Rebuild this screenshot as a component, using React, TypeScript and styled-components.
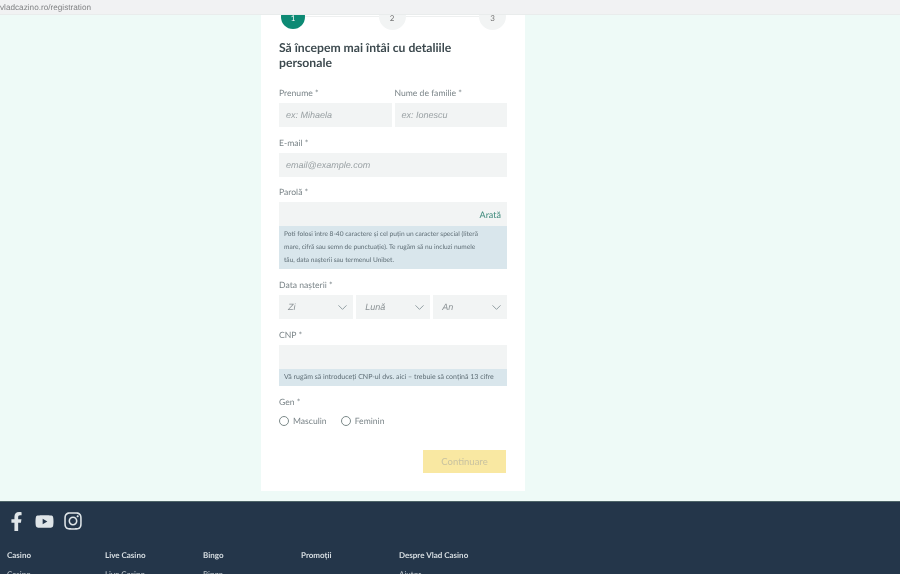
import React from 'react';
import styled, { createGlobalStyle } from 'styled-components';
import { FaFacebookF, FaYoutube, FaInstagram } from 'react-icons/fa';
import { ChevronDown } from 'lucide-react';

const GlobalStyle = createGlobalStyle`
  html, body {
    margin: 0;
    height: 574px;
    overflow: hidden;
    background: #eefaf7;
  }
  body {
    font-family: 'Lato', 'Open Sans', sans-serif;
    text-rendering: geometricPrecision;
  }
  * {
    box-sizing: border-box;
  }
`;

const Page = styled.div`
  width: 900px;
  height: 574px;
  display: flex;
  flex-direction: column;
  overflow: hidden;
  filter: blur(0.45px);
`;

const AddressBar = styled.div`
  position: relative;
  z-index: 2;
  flex: 0 0 15px;
  display: flex;
  align-items: center;
  background: #f1f2f3;
  border-bottom: 1px solid #e9ecec;
  font-family: 'Liberation Sans', sans-serif;
  font-size: 8.2px;
  color: #808284;
`;

const Main = styled.main`
  flex: 0 0 486px;
  display: flex;
  padding-left: 261px;
  background: #eefaf7;
`;

const Card = styled.section`
  width: 264px;
  height: 488px;
  margin-top: -12px;
  padding: 0 18px;
  background: #fff;
  display: flex;
  flex-direction: column;
`;

const Stepper = styled.div`
  position: relative;
  display: flex;
  justify-content: space-between;
  align-items: center;
  height: 27px;
  margin: 0 1px 0 2px;

  &::before {
    content: '';
    position: absolute;
    left: 12px;
    right: 12px;
    top: 13px;
    height: 1px;
    background: #eef0f0;
  }
`;

const Step = styled.div<{ $active?: boolean }>`
  position: relative;
  width: ${(p) => (p.$active ? 24 : 27)}px;
  height: ${(p) => (p.$active ? 24 : 27)}px;
  padding-top: 3px;
  border-radius: 50%;
  display: flex;
  align-items: center;
  justify-content: center;
  font-size: 8px;
  color: ${(p) => (p.$active ? '#fff' : '#777')};
  background: ${(p) => (p.$active ? '#0d8a74' : '#f2f4f4')};
`;

const Heading = styled.h1`
  margin: 10px 0 0;
  font-size: 12.2px;
  line-height: 15px;
  font-weight: 700;
  color: #3d4a4f;
`;

const Row = styled.div<{ $gap: number }>`
  display: flex;
  gap: ${(p) => p.$gap}px;
`;

const Field = styled.div<{ $top: number }>`
  margin-top: ${(p) => p.$top}px;
`;

const HalfField = styled(Field)`
  flex: 1;
  min-width: 0;
`;

const Label = styled.label`
  display: block;
  height: 12px;
  margin-bottom: 4px;
  font-size: 8.6px;
  line-height: 12px;
  color: #7a8488;
`;

const Input = styled.div`
  height: 24px;
  display: flex;
  align-items: center;
  justify-content: space-between;
  padding: 0 6px 0 7px;
  background: #f2f4f4;
  font-family: 'Liberation Sans', sans-serif;
  font-style: italic;
  font-size: 9px;
  color: #99a0a3;
`;

const ShowLink = styled.span`
  font-family: 'Lato', sans-serif;
  font-style: normal;
  font-size: 9px;
  color: #3f8a7c;
`;

const Hint = styled.div<{ $size: number }>`
  padding: 2px 5px;
  background: #d9e6ec;
  font-size: ${(p) => p.$size}px;
  line-height: 13px;
  color: #5f6e76;
`;

const Select = styled.div`
  flex: 1;
  height: 24px;
  display: flex;
  align-items: center;
  justify-content: space-between;
  padding: 0 3px 0 9px;
  background: #f2f4f4;
  font-family: 'Liberation Sans', sans-serif;
  font-style: italic;
  font-size: 9px;
  color: #8b9295;
`;

const RadioRow = styled.div`
  display: flex;
  gap: 14px;
  margin-top: 8px;
`;

const RadioItem = styled.div`
  display: flex;
  align-items: center;
  gap: 4px;
  font-size: 8.6px;
  color: #7a8488;
`;

const RadioDot = styled.span`
  width: 10px;
  height: 10px;
  border-radius: 50%;
  border: 1px solid #7c8a8a;
`;

const Actions = styled.div`
  display: flex;
  justify-content: flex-end;
  margin-top: 24px;
  padding-right: 1px;
`;

const Continue = styled.button`
  width: 83px;
  height: 23px;
  border: 0;
  padding: 0;
  background: #f9e8a2;
  font-family: 'Lato', sans-serif;
  font-size: 9.5px;
  color: #c8c2a0;
`;

const Footer = styled.footer`
  flex: 1;
  padding: 9px 7px 0;
  background: #24364a;
  border-top: 1px solid #4d6468;
  color: #dfe5e8;
`;

const Socials = styled.div`
  display: flex;
  align-items: center;
  height: 20px;
  gap: 9px;
`;

const FooterGrid = styled.div`
  display: grid;
  grid-template-columns: repeat(5, 98px);
  margin-top: 18px;
`;

const FooterTitle = styled.div`
  font-size: 8px;
  line-height: 12px;
  font-weight: 700;
  color: #d8dfe3;
`;

const FooterLink = styled.div`
  margin-top: 7px;
  font-size: 8px;
  line-height: 12px;
  color: #c4ccd1;
`;

const footerColumns = [
  { title: 'Casino', link: 'Casino' },
  { title: 'Live Casino', link: 'Live Casino' },
  { title: 'Bingo', link: 'Bingo' },
  { title: 'Promoții', link: '' },
  { title: 'Despre Vlad Casino', link: 'Ajutor' },
];

const App: React.FC = () => {
  return (
    <Page>
      <GlobalStyle />
      <AddressBar>vladcazino.ro/registration</AddressBar>
      <Main>
        <Card>
          <Stepper>
            <Step $active>1</Step>
            <Step>2</Step>
            <Step>3</Step>
          </Stepper>
          <Heading>Să începem mai întâi cu detaliile personale</Heading>
          <Row $gap={3}>
            <HalfField $top={17}>
              <Label>Prenume *</Label>
              <Input>ex: Mihaela</Input>
            </HalfField>
            <HalfField $top={17}>
              <Label>Nume de familie *</Label>
              <Input>ex: Ionescu</Input>
            </HalfField>
          </Row>
          <Field $top={10}>
            <Label>E-mail *</Label>
            <Input>email@example.com</Input>
          </Field>
          <Field $top={9}>
            <Label>Parolă *</Label>
            <Input>
              <span />
              <ShowLink>Arată</ShowLink>
            </Input>
            <Hint $size={6.6}>
              Poti folosi între 8-40 caractere și cel puțin un caracter special (literă
              <br />
              mare, cifră sau semn de punctuație). Te rugăm să nu incluzi numele
              <br />
              tău, data nașterii sau termenul Unibet.
            </Hint>
          </Field>
          <Field $top={10}>
            <Label>Data nașterii *</Label>
            <Row $gap={3.5}>
              {['Zi', 'Lună', 'An'].map((item) => (
                <Select key={item}>
                  {item}
                  <ChevronDown size={15} strokeWidth={1.5} color="#8d9a9e" />
                </Select>
              ))}
            </Row>
          </Field>
          <Field $top={10}>
            <Label>CNP *</Label>
            <Input />
            <Hint $size={7}>Vă rugăm să introduceți CNP-ul dvs. aici – trebuie să conțină 13 cifre</Hint>
          </Field>
          <Field $top={10}>
            <Label>Gen *</Label>
            <RadioRow>
              <RadioItem>
                <RadioDot />
                Masculin
              </RadioItem>
              <RadioItem>
                <RadioDot />
                Feminin
              </RadioItem>
            </RadioRow>
          </Field>
          <Actions>
            <Continue>Continuare</Continue>
          </Actions>
        </Card>
      </Main>
      <Footer>
        <Socials>
          <FaFacebookF size={19} />
          <FaYoutube size={19} />
          <FaInstagram size={20} />
        </Socials>
        <FooterGrid>
          {footerColumns.map((col) => (
            <div key={col.title}>
              <FooterTitle>{col.title}</FooterTitle>
              <FooterLink>{col.link}</FooterLink>
            </div>
          ))}
        </FooterGrid>
      </Footer>
    </Page>
  );
};

export default App;
